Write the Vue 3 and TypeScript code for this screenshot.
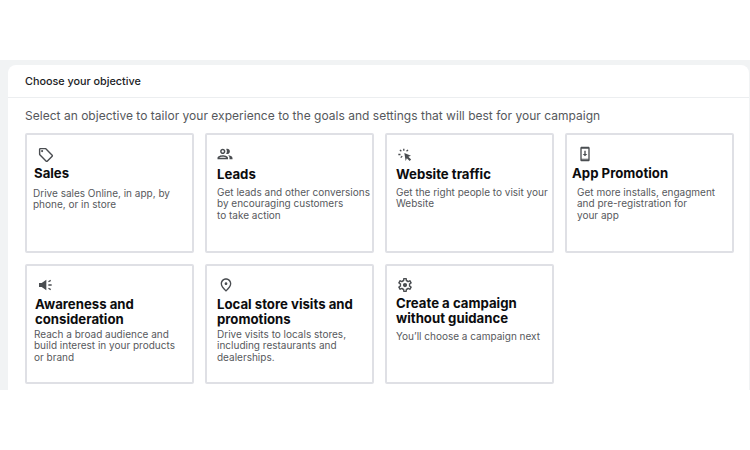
<script setup lang="ts">
interface Objective {
  key: string
  title: string[]
  desc: string[]
  paths: string[]
}

const objectives: Objective[] = [
  {
    key: 'sales',
    title: ['Sales'],
    desc: ['Drive sales Online, in app, by', 'phone, or in store'],
    paths: ['M21.41 11.58l-9-9C12.05 2.22 11.55 2 11 2H4c-1.1 0-2 .9-2 2v7c0 .55.22 1.05.59 1.42l9 9c.36.36.86.58 1.41.58s1.05-.22 1.41-.59l7-7c.37-.36.59-.86.59-1.41s-.23-1.06-.59-1.42zM13 20.01L4 11V4h7v-.01l9 9-7 7.02zM6.5 5a1.5 1.5 0 1 0 0 3 1.5 1.5 0 0 0 0-3z']
  },
  {
    key: 'leads',
    title: ['Leads'],
    desc: ['Get leads and other conversions', 'by encouraging customers', 'to take action'],
    paths: ['M9 13.75c-2.34 0-7 1.17-7 3.5V19h14v-1.75c0-2.33-4.66-3.5-7-3.5zM4.34 17c.84-.58 2.87-1.25 4.66-1.25s3.82.67 4.66 1.25H4.34zM9 12c1.93 0 3.5-1.57 3.5-3.5S10.93 5 9 5 5.5 6.57 5.5 8.5 7.07 12 9 12zm0-5c.83 0 1.5.67 1.5 1.5S9.83 10 9 10s-1.5-.67-1.5-1.5S8.17 7 9 7zm7.04 6.81c1.16.84 1.96 1.96 1.96 3.44V19h4v-1.75c0-2.02-3.5-3.17-5.96-3.44zM15 12c1.93 0 3.5-1.57 3.5-3.5S16.93 5 15 5c-.54 0-1.04.13-1.5.35.63.89 1 1.98 1 3.15s-.37 2.26-1 3.15c.46.22.96.35 1.5.35z']
  },
  {
    key: 'web',
    title: ['Website traffic'],
    desc: ['Get the right people to visit your', 'Website'],
    paths: ['M11 9l10 4-4 1.6 4.2 4.2-2.2 2.2-4.2-4.2L13 21z', 'M9.2 2.5h2v3.2h-2zM3.6 5l1.5-1.4 2.1 2.2-1.4 1.4zM2 10.2h3.2v2H2zM13.6 5.8l2.2-2.2 1.4 1.4L15 7.2zM4.9 15.2l2.2-2.2 1.4 1.4-2.2 2.2z']
  },
  {
    key: 'app',
    title: ['App Promotion'],
    desc: ['Get more installs, engagment', 'and pre-registration for', 'your app'],
    paths: ['M17 1H7C5.9 1 5 1.9 5 3v18c0 1.1.9 2 2 2h10c1.1 0 2-.9 2-2V3c0-1.1-.9-2-2-2zM7 4h10v15H7V4zm0 17v-.5h10v.5H7zM11 7h2v5h2.5L12 15.5 8.5 12H11V7z']
  },
  {
    key: 'aware',
    title: ['Awareness and', 'consideration'],
    desc: ['Reach a broad audience and', 'build interest in your products', 'or brand'],
    paths: ['M3 9h4l7-5v16l-7-5H3z', 'M17 11h5v2h-5zM16.7 6.3l3.4-2 1 1.7-3.4 2zM16.7 17.7l1-1.7 3.4 2-1 1.7z']
  },
  {
    key: 'local',
    title: ['Local store visits and', 'promotions'],
    desc: ['Drive visits to locals stores,', 'including restaurants and', 'dealerships.'],
    paths: ['M12 12c-1.1 0-2-.9-2-2s.9-2 2-2 2 .9 2 2-.9 2-2 2zm6-1.8C18 6.57 15.35 4 12 4s-6 2.57-6 6.2c0 2.34 1.95 5.44 6 9.14 4.05-3.7 6-6.8 6-9.14zM12 2c4.2 0 8 3.22 8 8.2 0 3.32-2.67 7.25-8 11.8-5.33-4.55-8-8.48-8-11.8C4 5.22 7.8 2 12 2z']
  },
  {
    key: 'none',
    title: ['Create a campaign', 'without guidance'],
    desc: ['You\u2019ll choose a campaign next'],
    paths: ['M19.43 12.98c.04-.32.07-.64.07-.98 0-.34-.03-.66-.07-.98l2.11-1.65c.19-.15.24-.42.12-.64l-2-3.46c-.09-.16-.26-.25-.44-.25-.06 0-.12.01-.17.03l-2.49 1c-.52-.4-1.08-.73-1.69-.98l-.38-2.65C14.46 2.18 14.25 2 14 2h-4c-.25 0-.46.18-.49.42l-.38 2.65c-.61.25-1.17.59-1.69.98l-2.49-1c-.06-.02-.12-.03-.18-.03-.17 0-.34.09-.43.25l-2 3.46c-.13.22-.07.49.12.64l2.11 1.65c-.04.32-.07.65-.07.98 0 .33.03.66.07.98l-2.11 1.65c-.19.15-.24.42-.12.64l2 3.46c.09.16.26.25.44.25.06 0 .12-.01.17-.03l2.49-1c.52.4 1.08.73 1.69.98l.38 2.65c.03.24.24.42.49.42h4c.25 0 .46-.18.49-.42l.38-2.65c.61-.25 1.17-.59 1.69-.98l2.49 1c.06.02.12.03.18.03.17 0 .34-.09.43-.25l2-3.46c.12-.22.07-.49-.12-.64l-2.11-1.65zm-1.98-1.71c.04.31.05.52.05.73 0 .21-.02.43-.05.73l-.14 1.13.89.7 1.08.84-.7 1.21-1.27-.51-1.04-.42-.9.68c-.43.32-.84.56-1.25.73l-1.06.43-.16 1.13-.2 1.35h-1.4l-.19-1.35-.16-1.13-1.06-.43c-.43-.18-.83-.41-1.23-.71l-.91-.7-1.06.43-1.27.51-.7-1.21 1.08-.84.89-.7-.14-1.13c-.03-.31-.05-.54-.05-.74s.02-.43.05-.73l.14-1.13-.89-.7-1.08-.84.7-1.21 1.27.51 1.04.42.9-.68c.43-.32.84-.56 1.25-.73l1.06-.43.16-1.13.2-1.35h1.39l.19 1.35.16 1.13 1.06.43c.43.18.83.41 1.23.71l.91.7 1.06-.43 1.27-.51.7 1.21-1.07.85-.89.7.14 1.13zM12 9a3 3 0 1 0 0 6 3 3 0 0 0 0-6z']
  }
]
</script>

<template>
  <div class="page">
    <section class="panel">
      <header class="panel-head">Choose your objective</header>
      <p class="lead">Select an objective to tailor your experience to the goals and settings that will best for your campaign</p>
      <div class="grid">
        <article v-for="o in objectives" :key="o.key" class="tile" :class="o.key">
          <svg class="icon" viewBox="0 0 24 24" aria-hidden="true">
            <path v-for="(d, i) in o.paths" :key="i" :d="d" />
          </svg>
          <h3 class="title">
            <span v-for="t in o.title" :key="t">{{ t }}</span>
          </h3>
          <p class="desc">
            <span v-for="d in o.desc" :key="d">{{ d }}</span>
          </p>
        </article>
      </div>
    </section>
  </div>
</template>

<style>
html,
body {
  margin: 0;
  background: #fff;
}
</style>

<style scoped>
.page {
  width: 750px;
  height: 450px;
  box-sizing: border-box;
  padding-top: 60px;
  font-family: Inter, "Liberation Sans", sans-serif;
  background: #fff;
}
.panel {
  box-sizing: border-box;
  height: 330px;
  margin: 0;
  padding: 5px 1px 0 8px;
  background: #f1f3f4;
  display: flex;
  flex-direction: column;
}
.panel-head {
  height: 33px;
  flex: none;
  box-sizing: border-box;
  padding: 9px 0 0 17px;
  font-size: 10.8px;
  line-height: 15px;
  font-weight: 500;
  color: #202124;
  background: #fff;
  border-radius: 8px 8px 0 0;
  border-bottom: 1px solid #eceef0;
}
.lead {
  margin: 0;
  padding: 10px 0 9px 17px;
  font-size: 12px;
  line-height: 16px;
  color: #55585c;
  background: #fff;
  letter-spacing: 0.02px;
  white-space: nowrap;
}
.grid {
  flex: 1;
  background: #fff;
  padding-left: 17px;
  display: grid;
  grid-template-columns: repeat(4, 169px);
  grid-auto-rows: 120px;
  gap: 11px;
}
.tile {
  box-sizing: border-box;
  border: 2px solid #dfe0e5;
  border-radius: 2px;
  padding: 11px 0 0 10px;
  display: flex;
  flex-direction: column;
  background: #fff;
}
.icon {
  width: 18px;
  height: 18px;
  box-sizing: border-box;
  fill: #4a4d51;
  flex: none;
}
.title {
  margin: 3px 0 0;
  font-size: 13.2px;
  line-height: 15px;
  font-weight: 700;
  color: #0c0c0e;
  display: flex;
  flex-direction: column;
  white-space: nowrap;
}
.desc {
  margin: 5px 0 0;
  font-size: 10px;
  line-height: 11.3px;
  color: #57595d;
  display: flex;
  flex-direction: column;
  white-space: nowrap;
}
.sales { padding-left: 9.5px; }
.sales .icon { padding: 0.5px; }
.sales .title { margin: 2px 0 0 -2.5px; }
.sales .desc { margin: 6.5px 0 0 -3.5px; }

.leads .icon { margin-left: -1.5px; margin-top: -1px; }
.leads .title { margin-top: 4px; }

.web { padding-left: 9px; }
.web .icon { padding: 1px; }

.app { padding-left: 9px; }
.app .icon { padding: 1px; margin-top: -1px; }
.app .title { margin: 3px 0 0 -4px; }
.app .desc { margin: 6px 0 0 1px; }

.aware { padding-left: 9px; padding-top: 10px; }
.aware .icon { padding: 1px; }
.aware .title { margin: 2.5px 0 0 -1px; }
.aware .desc { margin: 2.5px 0 0 -2px; }

.local { padding-top: 10px; }
.local .icon { padding: 1px; margin-left: -0.5px; }
.local .title { margin-top: 2.5px; }
.local .desc { margin-top: 2.5px; }

.none { padding-left: 9px; padding-top: 10px; }
.none .icon { padding: 0.5px; }
.none .title { margin-top: 2px; }
.none .desc { margin-top: 5px; }
</style>
